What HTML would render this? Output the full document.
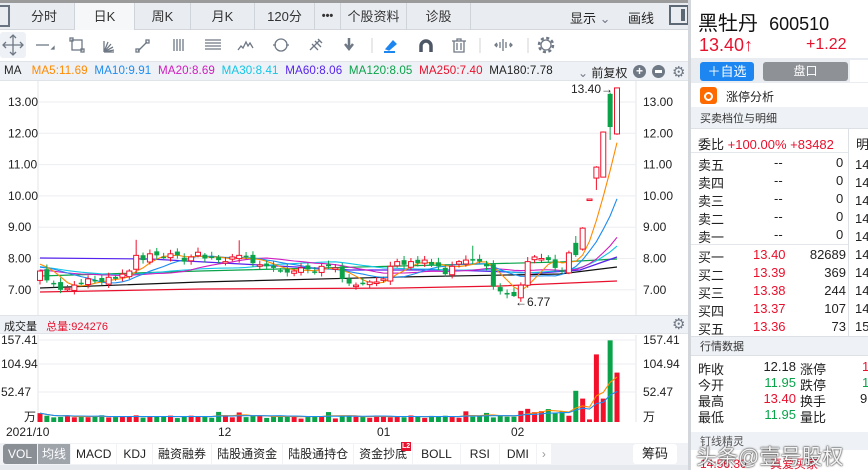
<!DOCTYPE html>
<html><head><meta charset="utf-8">
<style>
*{margin:0;padding:0;box-sizing:border-box}
body{width:868px;height:470px;overflow:hidden;background:#fff;font-family:"Liberation Sans","Noto Sans CJK SC",sans-serif;color:#222;position:relative}
.a{position:absolute;white-space:nowrap}
.tab{position:absolute;top:3px;height:27px;line-height:27px;text-align:center;font-size:13px;color:#333;border-right:1px solid #cfd4da}
.r{color:#e8112d}.g{color:#0aa34a}
.rp{font-size:13px}
</style></head><body>
<div class="a" style="left:0;top:0;width:690px;height:3px;background:#9b9b9b"></div>
<div class="a" style="left:0;top:3px;width:690px;height:27px;background:#e9ecf0;border-bottom:1px solid #d3d7dc"></div>
<div class="a" style="left:0;top:5px;width:10px;height:22px;border:2px solid #6a7380;border-left:none"></div>
<div class="tab" style="left:14px;width:61px">分时</div>
<div class="tab" style="left:75px;width:60px;background:#f5f7f9">日K</div>
<div class="tab" style="left:135px;width:56px">周K</div>
<div class="tab" style="left:191px;width:64px">月K</div>
<div class="tab" style="left:255px;width:60px">120分</div>
<div class="tab" style="left:315px;width:26px;font-weight:bold;font-size:11px">•••</div>
<div class="tab" style="left:341px;width:66px">个股资料</div>
<div class="tab" style="left:407px;width:64px">诊股</div>
<div class="a" style="left:570px;top:8px;font-size:13px">显示 <span style="color:#778">&#8964;</span></div>
<div class="a" style="left:628px;top:8px;font-size:13px">画线</div>
<div class="a" style="left:669px;top:5px;width:20px;height:20px;border:2px solid #5d6875"><div style="position:absolute;right:2px;top:2px;width:4px;height:12px;background:#5d6875"></div></div>
<div class="a" style="left:688px;top:0;width:3px;height:470px;background:#d3d7dc"></div>
<div class="a" style="left:0;top:32px;width:26px;height:26px;background:#eef1f5;border-radius:3px"></div>
<svg class="a" style="left:0;top:30px" width="560" height="30" stroke="#6f7885" fill="none" stroke-width="1.3">
<path d="M3 15h20M13 5v20M10 8l3-3 3 3M10 22l3 3 3-3M6 12l-3 3 3 3M20 12l3 3-3 3"/>
<path d="M36 15h13"/><path d="M52 19l2 0 0-2z" fill="#6f7885"/>
<rect x="72" y="10" width="10" height="10"/><rect x="70" y="8" width="3" height="3"/><rect x="81" y="19" width="3" height="3"/>
<path d="M104 22l0-11M104 22l4-10M104 22l7-8M104 22l9-5M104 22l10-2M104 22h10"/>
<path d="M138 21l9-9"/><rect x="136" y="19" width="3" height="3"/><rect x="146" y="10" width="3" height="3"/>
<path d="M174 9v12M177 9v12M180 9v12M183 9v12"/>
<path d="M205 10h16M205 13h16M205 16h16M205 19h16"/>
<path d="M238 20l3-4 2 2 3-6 2 4 2-3 3 5"/>
<circle cx="281" cy="15" r="6"/><path d="M273 15h3M286 15h3"/>
<path d="M310 20l10-10M312 14l6 6M315 11l6 6M318 9l4 4"/>
<path d="M349 8v9M345 14l4 5 4-5" stroke-width="2.5"/>
<path d="M372 8v15" stroke="#ddd"/>
<path d="M386 19l7-8 3 3-7 6z" fill="#1d86f0" stroke="#1d86f0"/><path d="M384 22h11" stroke="#1d86f0" stroke-width="2"/>
<path d="M421 22v-6a5 5 0 0 1 10 0v6" stroke-width="3.5" stroke="#4d5765"/>
<path d="M452 11h14M457 11v-2h4v2M454 11v11h10v-11M457 13v7M461 13v7"/>
<path d="M480 8v15" stroke="#ddd"/>
<path d="M503 9v12M498 15l-3 0M509 15h3M497 13l-2 2 2 2M510 13l2 2-2 2M500 12v6M506 12v6"/>
<path d="M528 8v15" stroke="#ddd"/>
<circle cx="546" cy="15" r="5"/><circle cx="546" cy="15" r="7" stroke-dasharray="3 2.5" stroke-width="2.5"/>
</svg>
<div class="a" style="left:0;top:61px;width:688px;height:20px;background:#eef1f5;border-top:1px solid #e0e3e7;border-bottom:1px solid #e0e3e7"></div>
<div class="a" style="left:4px;top:64px;font-size:11.6px;letter-spacing:0.1px">MA&nbsp;&nbsp;&nbsp;<span style="color:#ff8a00">MA5:11.69</span>&nbsp;&nbsp;<span style="color:#1d8cf0">MA10:9.91</span>&nbsp;&nbsp;<span style="color:#d01cc0">MA20:8.69</span>&nbsp;&nbsp;<span style="color:#12c6e6">MA30:8.41</span>&nbsp;&nbsp;<span style="color:#5522ee">MA60:8.06</span>&nbsp;&nbsp;<span style="color:#0aa34a">MA120:8.05</span>&nbsp;&nbsp;<span style="color:#e8112d">MA250:7.40</span>&nbsp;&nbsp;MA180:7.78</div>
<div class="a" style="left:578px;top:64px;font-size:12px"><span style="color:#778">&#8964;</span> 前复权</div>
<div class="a" style="left:633px;top:65px;width:13px;height:13px;border-radius:50%;background:#6f7885;color:#fff;font-size:12px;line-height:12px;text-align:center;font-weight:bold">+</div>
<div class="a" style="left:652px;top:65px;width:13px;height:13px;border-radius:50%;background:#6f7885"><div style="margin:5px 3px;height:3px;background:#fff"></div></div>
<div class="a" style="left:672px;top:63px;font-size:15px;color:#6f7885">&#9881;</div>
<div class="a" style="left:0;top:315px;width:688px;height:19px;background:#eef1f5;border-top:1px solid #e0e3e7;border-bottom:1px solid #e0e3e7"></div>
<div class="a" style="left:4px;top:318px;font-size:11px">成交量&nbsp;&nbsp;&nbsp;<span class="r">总量:924276</span></div>
<div class="a" style="left:672px;top:315px;font-size:15px;color:#6f7885">&#9881;</div>
<svg id="ch" class="a" style="left:0;top:81px" width="688" height="362"></svg>
<div class="a" style="left:0;top:443px;width:688px;height:22px;background:#f0f2f5"></div>
<div class="a" style="left:0;top:465px;width:688px;height:5px;background:#e6e9ed"></div>
<div class="a" style="left:3px;top:444px;height:20px;font-size:12px;line-height:20px;display:flex">
<span style="background:#8a8f96;color:#fff;padding:0 5px;border-radius:3px 0 0 3px">VOL</span><span style="background:#9fa4ab;color:#fff;padding:0 4px;margin-left:1px">均线</span>
<span style="background:#fff;padding:0 5px;margin-left:1px">MACD</span><span style="background:#fff;padding:0 6px;margin-left:1px">KDJ</span><span style="background:#fff;padding:0 5px;margin-left:1px">融资融券</span><span style="background:#fff;padding:0 5px;margin-left:1px">陆股通资金</span><span style="background:#fff;padding:0 5px;margin-left:1px">陆股通持仓</span><span style="background:#fff;padding:0 5px;margin-left:1px;position:relative">资金抄底<b style="position:absolute;right:1px;top:-2px;background:#e8112d;color:#fff;font-size:7px;line-height:9px;padding:0 1px">L2</b></span><span style="background:#fff;padding:0 8px;margin-left:1px">BOLL</span><span style="background:#fff;padding:0 9px;margin-left:1px">RSI</span><span style="background:#fff;padding:0 7px;margin-left:1px">DMI</span><span style="background:#fff;padding:0 5px;margin-left:1px;color:#999">&#8250;</span></div>
<div class="a" style="left:633px;top:444px;width:44px;height:20px;background:#fff;font-size:13px;line-height:20px;text-align:center;border-radius:3px">筹码</div>

<div class="a" style="left:698px;top:7px;font-size:20px;color:#111">黑牡丹&nbsp; <span style="font-size:18px">600510</span></div>
<div class="a r" style="left:699px;top:35px;font-size:18px">13.40↑</div>
<div class="a r" style="left:806px;top:36px;font-size:16px">+1.22</div>
<div class="a" style="left:691px;top:58px;width:177px;height:25px;background:#e9ecf0"></div>
<div class="a" style="left:700px;top:62px;width:54px;height:19px;background:#1d86f0;color:#fff;border-radius:3px;font-size:13px;line-height:19px;text-align:center">＋自选</div>
<div class="a" style="left:763px;top:62px;width:85px;height:19px;background:#8e9297;color:#fff;border-radius:3px;font-size:12px;line-height:19px;text-align:center">盘口</div>
<div class="a" style="left:850px;top:60px;width:18px;height:22px;background:#fff"></div>
<div class="a" style="left:700px;top:87px;width:17px;height:17px;background:#ff6a00;border-radius:3px"><div style="margin:5px 4px;width:9px;height:9px;border-radius:50%;border:2px solid #fff"></div></div>
<div class="a" style="left:726px;top:88px;font-size:12px">涨停分析</div>
<div class="a" style="left:691px;top:107px;width:177px;height:22px;background:#eef1f5;border-bottom:1px solid #dde1e5"></div>
<div class="a" style="left:700px;top:110px;font-size:11px;color:#333">买卖档位与明细</div>
<div class="a" style="left:848px;top:129px;width:1px;height:210px;background:#dde1e5"></div>
<div class="a" style="left:691px;top:152px;width:157px;height:1px;background:#e3e6ea"></div>
<div class="a rp" style="left:698px;top:134px">委比 <span class="r">+100.00% +83482</span></div>
<div class="a rp" style="left:856px;top:134px">明</div>
<div id="ob"></div>
<div class="a" style="left:691px;top:336px;width:177px;height:20px;background:#eef1f5;border-top:1px solid #dde1e5;border-bottom:1px solid #dde1e5"></div>
<div class="a" style="left:700px;top:338px;font-size:11px;color:#333">行情数据</div>
<div id="qd"></div>
<div class="a" style="left:691px;top:432px;width:177px;height:18px;background:#eef1f5"></div>
<div class="a" style="left:700px;top:433px;font-size:11px;color:#555">钉线精灵</div>
<div class="a r" style="left:700px;top:455px;font-size:12px">14:56:30&nbsp;&nbsp;&nbsp;&nbsp;&nbsp;&nbsp;&nbsp;真爱买家</div>
<div class="a" style="left:696px;top:441px;font-size:21px;color:rgba(255,255,255,.95);text-shadow:0 0 2px #333,0 0 1px #000">头条@壹号股权</div>
<script>
var ns="http://www.w3.org/2000/svg",S=document.getElementById('ch');
function el(t,a){var e=document.createElementNS(ns,t);for(var k in a)e.setAttribute(k,a[k]);S.appendChild(e);return e}
function tx(x,y,s,a){var e=el('text',Object.assign({x:x,y:y,'font-size':12,fill:'#222','font-family':'Liberation Sans'},a||{}));e.textContent=s}
var OY=81;function Y(p){return 102+(13-p)*31.3-OY}
el('line',{x1:38,y1:0,x2:38,y2:234,stroke:'#e2e5e9'});el('line',{x1:636,y1:0,x2:636,y2:234,stroke:'#e2e5e9'});
el('line',{x1:38,y1:254,x2:38,y2:341,stroke:'#e2e5e9'});el('line',{x1:636,y1:254,x2:636,y2:341,stroke:'#e2e5e9'});
[13,12,11,10,9,8,7].forEach(function(p){var y=Y(p);el('line',{x1:38,y1:y,x2:636,y2:y,stroke:'#eceef1'});tx(8,y+4,p.toFixed(2));tx(643,y+4,p.toFixed(2));});
var vl=[[157.41,340],[104.94,364],[52.47,392]];vl.forEach(function(v){var y=v[1]-OY;el('line',{x1:38,y1:y,x2:636,y2:y,stroke:'#eceef1'});tx(1,y+4,v[0].toFixed(2));tx(643,y+4,v[0].toFixed(2));});
tx(24,340,'万');tx(643,340,'万');
tx(6,355,'2021/10');tx(218,355,'12');tx(377,355,'01');tx(511,355,'02');
var C=[7.6,7.3,7.2,7.0,7.05,7.15,7.2,7.35,7.3,7.25,7.4,7.35,7.5,7.6,8.1,7.95,8.15,8.1,8.05,8.15,8.1,7.9,8.05,8.2,8.0,8.05,7.95,7.9,8.05,8.1,8.05,7.85,7.8,7.75,7.7,7.6,7.55,7.6,7.7,7.65,7.55,7.75,7.75,7.7,7.35,7.2,7.15,7.2,7.25,7.25,7.35,7.75,7.9,7.8,7.9,7.85,7.95,7.8,7.75,7.5,7.75,7.9,7.95,7.95,7.9,7.75,7.1,6.95,6.85,6.8,7.15,7.9,8.05,8.0,7.95,7.7,7.6];
var D=[];for(var i=0;i<C.length;i++){var o=i?C[i-1]+Math.sin(i*2.3)*0.08:7.3;var c=C[i];var h=Math.max(o,c)+0.05+Math.abs(Math.sin(i*1.7))*0.1,l=Math.min(o,c)-0.05-Math.abs(Math.cos(i*1.3))*0.08;if(i==14||i==29||i==63)h+=0.35;if(i==69)l=6.77;D.push([o,h,l,c]);}
D.push([7.54,8.25,7.5,8.18],[8.5,8.72,8.05,8.11],[8.3,9.0,8.25,8.97],[9.9,9.9,9.9,9.9],[10.57,10.95,10.19,10.92],[10.6,12.06,10.6,12.04],[13.26,13.3,11.79,12.2],[11.98,13.45,11.95,13.45]);
var N=D.length,st=577/(N-1);function X(i){return 40+st*i}
var cl=D.map(function(d){return d[3]});
var pre=[];for(i=0;i<40;i++)pre.push(7.7+0.35*Math.sin(i/6)+0.2*(i/40));
var all=pre.concat(cl);
function ma(n){var r=[];for(var i=0;i<N;i++){var s=0;for(var k=0;k<n;k++)s+=all[40+i-k];r.push(s/n)}return r}
function pl(arr,col){var d='';arr.forEach(function(p,i){d+=(i?'L':'M')+X(i).toFixed(1)+' '+Y(p).toFixed(1)});el('path',{d:d,stroke:col,fill:'none','stroke-width':1.1})}
function fix(pts,col){var d='';pts.forEach(function(p,i){d+=(i?'L':'M')+p[0]+' '+(p[1]-OY)});el('path',{d:d,stroke:col,fill:'none','stroke-width':1.2})}
fix([[40,292],[200,289],[400,288],[500,286],[617,281]],'#e8112d');
fix([[40,288],[200,282],[400,277],[560,274],[617,267]],'#111');
fix([[40,276],[200,271],[400,266],[560,262],[617,259]],'#0aa34a');
fix([[40,258],[150,259],[260,265],[350,270],[450,270],[540,273],[580,270],[617,257]],'#5522ee');
pl(ma(30),'#12c6e6');pl(ma(20),'#d01cc0');pl(ma(10),'#1d8cf0');pl(ma(5),'#ff8a00');
D.forEach(function(d,i){var x=X(i),up=d[3]>=d[0],col=up?'#f2102a':'#0aa34a';
el('line',{x1:x,y1:Y(d[1]),x2:x,y2:Y(d[2]),stroke:col});
var t=Y(Math.max(d[0],d[3])),b=Y(Math.min(d[0],d[3]));if(b-t<1.5)b=t+1.5;
if(up)el('rect',{x:x-2.5,y:t,width:5,height:b-t,fill:'#fff',stroke:col});else el('rect',{x:x-2.5,y:t,width:5,height:b-t,fill:col});});
tx(571,12,'13.40→',{'font-size':12});tx(515,225,'←6.77',{'font-size':12});
var base=422-OY,V=[];for(i=0;i<N-8;i++){var v=6+4*Math.abs(Math.sin(i*1.9))+3*Math.abs(Math.cos(i*0.7));if([0,26,29,42,62,65].indexOf(i)>=0)v+=8;if(i>=70)v+=6+ (i%3)*5;V.push(v)}
V.push(12,60,45,5,130,45,157,95);
V.forEach(function(v,i){var d=D[i],up=d[3]>=d[0];var h=Math.min(v,159)*0.52;el('rect',{x:X(i)-2.5,y:base-h,width:5,height:h,fill:up?'#f2102a':'#0aa34a'})});
function vma(n,col){var d='';for(var i=0;i<N;i++){var s=0,c=0;for(var k=0;k<n&&i-k>=0;k++){s+=V[i-k];c++}d+=(i?'L':'M')+X(i).toFixed(1)+' '+(base-s/c*0.52).toFixed(1)}el('path',{d:d,stroke:col,fill:'none','stroke-width':1.1})}
vma(5,'#ff8a00');vma(10,'#1d8cf0');
var ob=document.getElementById('ob'),h='';
['卖五','卖四','卖三','卖二','卖一'].forEach(function(n,i){var y=155+i*18;h+='<div class="a rp" style="left:698px;top:'+y+'px">'+n+'</div><div class="a rp" style="left:774px;top:'+y+'px">--</div><div class="a rp" style="left:836px;top:'+y+'px">0</div><div class="a rp" style="left:855px;top:'+(y+2)+'px">14</div>'});
h+='<div class="a" style="left:691px;top:244px;width:157px;height:1px;background:#e3e6ea"></div>';
[['买一','13.40','82689'],['买二','13.39','369'],['买三','13.38','244'],['买四','13.37','107'],['买五','13.36','73']].forEach(function(r,i){var y=247+i*18;h+='<div class="a rp" style="left:698px;top:'+y+'px">'+r[0]+'</div><div class="a rp r" style="left:753px;top:'+y+'px">'+r[1]+'</div><div class="a rp" style="left:795px;top:'+y+'px;width:51px;text-align:right">'+r[2]+'</div><div class="a rp" style="left:855px;top:'+y+'px">'+(i==4?'15':'14')+'</div>'});
ob.innerHTML=h;
h='';[['昨收','12.18','','涨停'],['今开','11.95','g','跌停'],['最高','13.40','r','换手'],['最低','11.95','g','量比']].forEach(function(r,i){var y=359+i*16;h+='<div class="a rp" style="left:698px;top:'+y+'px">'+r[0]+'</div><div class="a rp '+r[2]+'" style="left:740px;top:'+y+'px;width:56px;text-align:right">'+r[1]+'</div><div class="a rp" style="left:800px;top:'+y+'px">'+r[3]+'</div>'});
h+='<div class="a rp r" style="left:862px;top:359px">1</div><div class="a rp g" style="left:862px;top:375px">1</div><div class="a rp" style="left:860px;top:391px">9</div>';
document.getElementById('qd').innerHTML=h;
</script>
</body></html>
